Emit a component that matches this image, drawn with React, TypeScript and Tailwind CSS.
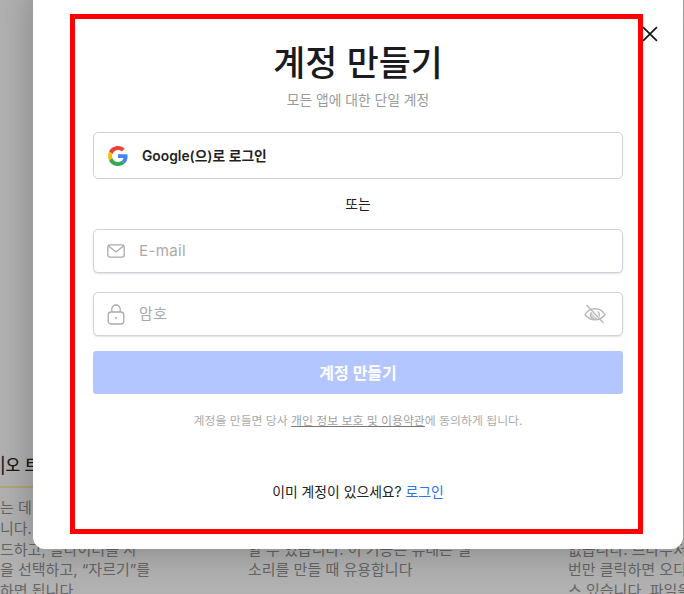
const font = "font-['Inter','Noto_Sans_CJK_KR',sans-serif]";

const GoogleIcon = () => (
  <svg width="20" height="20" viewBox="0 0 48 48">
    <path fill="#EA4335" d="M24 9.5c3.54 0 6.71 1.22 9.21 3.6l6.85-6.85C35.9 2.38 30.47 0 24 0 14.62 0 6.51 5.38 2.56 13.22l7.98 6.19C12.43 13.72 17.74 9.5 24 9.5z" />
    <path fill="#4285F4" d="M46.98 24.55c0-1.57-.15-3.09-.38-4.55H24v9.02h12.94c-.58 2.96-2.26 5.48-4.78 7.18l7.73 6c4.51-4.18 7.09-10.36 7.09-17.65z" />
    <path fill="#FBBC05" d="M10.53 28.59c-.48-1.45-.76-2.99-.76-4.59s.27-3.14.76-4.59l-7.98-6.19C.92 16.46 0 20.12 0 24c0 3.88.92 7.54 2.56 10.78l7.97-6.19z" />
    <path fill="#34A853" d="M24 48c6.48 0 11.93-2.13 15.89-5.81l-7.73-6c-2.15 1.45-4.92 2.3-8.16 2.3-6.26 0-11.57-4.22-13.47-9.91l-7.98 6.19C6.51 42.62 14.62 48 24 48z" />
  </svg>
);

const MailIcon = () => (
  <svg width="18" height="14" viewBox="0 0 18 14" fill="none" stroke="#aaaaaa" strokeWidth="1.3">
    <rect x="0.8" y="0.8" width="16.4" height="12.4" rx="2.5" />
    <path d="M1.5 2 9 8l7.5-6" />
  </svg>
);

const LockIcon = () => (
  <svg width="18" height="21" viewBox="0 0 18 21" fill="none" stroke="#aaaaaa" strokeWidth="1.3">
    <rect x="1.200" y="8" width="15.600" height="12" rx="3" />
    <path d="M4.800 8V5.200a4.200 4.200 0 0 1 8.400 0V8" />
    <circle cx="9" cy="14" r="1" fill="#aaaaaa" stroke="none" />
  </svg>
);

const EyeSlashIcon = () => (
  <svg width="22" height="20" viewBox="0 0 22 20" fill="none" stroke="#b9b9b9" strokeWidth="1.4">
    <path d="M1 10.500C3.500 6.500 7 4.800 11 4.800s7.500 1.700 10 5.700c-2.500 3.700-6 5.400-10 5.400s-7.500-1.700-10-5.400z" />
    <path d="M7.500 8.500a4.200 4.200 0 0 0 5.500 6.200" fill="#d4d4d4" />
    <path d="M13.500 7.500a4 4 0 0 1 1.500 5" />
    <path d="M2.500 1 19.500 19" />
  </svg>
);

const Field = ({ icon, placeholder, right }: { icon: React.ReactNode; placeholder: string; right?: React.ReactNode }) => (
  <div className="flex h-11 items-center rounded-[5px] border border-[#d0d2da] bg-white shadow-[0_1px_2px_rgba(0,0,0,0.12)]">
    <div className="flex w-[45px] shrink-0 justify-center pr-[2px]">{icon}</div>
    <span className="text-[15px] tracking-[0.4px] text-[#a9a9a9]">{placeholder}</span>
    {right && <div className="ml-auto pr-[16px]">{right}</div>}
  </div>
);

const BackdropColumn = ({ lines, className }: { lines: string[]; className: string }) => (
  <div className={`absolute top-[498px] text-[15px] leading-[20.800px] whitespace-nowrap text-[#656565] ${className}`}>
    {lines.map((line) => (
      <p key={line}>{line}</p>
    ))}
  </div>
);

export default function App() {
  return (
    <div className={`relative h-[594px] w-[684px] overflow-hidden bg-[#b2b2b2] ${font}`}>
      <div className="absolute top-[453px] left-0 w-[60px] border-b-2 border-[#b3a877] pb-[9px] text-[16px] font-medium whitespace-nowrap text-[#1c1c1c]">
        |오 트
      </div>
      <BackdropColumn className="left-0" lines={["는 데", "니다.", "드하고, 슬라이더를 사", "을 선택하고, “자르기”를", "하면 됩니다"]} />
      <BackdropColumn className="left-[248px]" lines={["비디오를 편집할", "오디오를 추출할", "할 수 있습니다. 이 기능은 유네는 멜", "소리를 만들 때 유용합니다"]} />
      <BackdropColumn className="left-[568px]" lines={["설치할 필요가", "없습니다", "없습니다. 브라우저", "번만 클릭하면 오디", "스 있습니다. 파일을"]} />

      <div className="absolute top-[-16px] left-[33px] h-[565px] w-[650px] rounded-[12px] bg-white shadow-[0_0_40px_rgba(0,0,0,0.28)]">
        <div className="absolute top-[30px] left-[37px] flex h-[520px] w-[573px] flex-col items-center border-[5px] border-[#ff0000] pr-[15px] pl-[18px]">
          <h1 className="mt-[21px] text-[34.800px] leading-[46px] font-medium text-[#1a1a1f]">계정 만들기</h1>
          <p className="mt-[4px] text-[13.800px] leading-[20px] text-[#9a9a9a]">모든 앱에 대한 단일 계정</p>

          <div className="mt-[22px] flex h-[47px] w-full items-center rounded-[5px] border border-[#cfcfcf] bg-white">
            <div className="ml-[14px]"><GoogleIcon /></div>
            <span className="mt-[2px] ml-[14px] text-[13.800px] font-semibold text-[#1f1f24]">Google(으)로 로그인</span>
          </div>

          <p className="mt-[15px] text-[13.800px] leading-[20px] text-[#222]">또는</p>

          <div className="mt-[15px] flex w-full flex-col gap-[19px]">
            <Field icon={<MailIcon />} placeholder="E-mail" />
            <Field icon={<LockIcon />} placeholder="암호" right={<EyeSlashIcon />} />
          </div>

          <button className="mt-[15px] h-[43px] w-full rounded-[3px] bg-[#b3c6ff] text-[16px] font-semibold text-white">계정 만들기</button>

          <p className="mt-[17px] text-[11.900px] leading-[20px] text-[#ababab]">
            계정을 만들면 당사 <span className="text-[#a0a0a0] underline decoration-[#777]">개인 정보 보호 및 이용약관</span>에 동의하게 됩니다.
          </p>

          <p className="mt-[51px] text-[13.850px] leading-[20px] text-[#222]">
            이미 계정이 있으세요? <span className="text-[#3270ee]">로그인</span>
          </p>
        </div>
        <svg className="absolute top-[42px] left-[609px]" width="16" height="16" viewBox="0 0 15 15" stroke="#111" strokeWidth="1.5">
          <path d="M1 1l13 13M14 1 1 14" />
        </svg>
      </div>
    </div>
  );
}
